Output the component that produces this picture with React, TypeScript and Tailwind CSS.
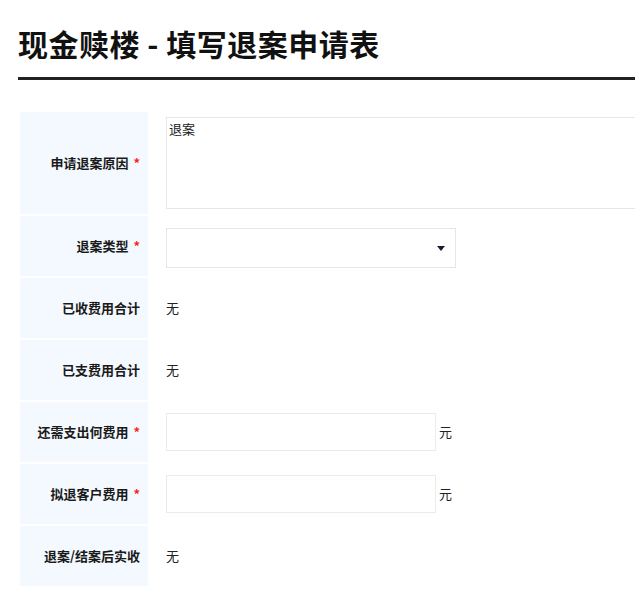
import React from 'react';

const font = { fontFamily: '"Noto Sans CJK SC", "Noto Sans", sans-serif' };

function Label({ text, required }: { text: string; required?: boolean }) {
  return (
    <div className="flex items-center justify-end bg-[#f3f9fe] pr-[8px] text-[13px] font-bold text-[#1a1a1a]">
      <span>{text}</span>
      {required && <span className="ml-[5px] text-[#ff2222]">*</span>}
    </div>
  );
}

function Value({ children }: { children: React.ReactNode }) {
  return <div className="flex items-center pl-[16px] text-[13px] text-[#222]">{children}</div>;
}

function MoneyInput() {
  return (
    <div className="flex items-center">
      <input className="h-[38px] w-[270px] border border-[#ebebeb] bg-white px-2 outline-none" />
      <span className="ml-[3px]">元</span>
    </div>
  );
}

export default function App() {
  return (
    <div className="min-h-screen overflow-hidden bg-white pl-[18px] pt-[22px]" style={font}>
      <h1 className="w-[700px] border-b-[3px] border-[#222] pb-[13px] text-[30px] font-bold leading-[42px] tracking-[0.5px] text-[#111]">
        现金赎楼 - 填写退案申请表
      </h1>

      <div className="mt-[32px] ml-[2px] grid w-[700px] grid-cols-[128px_1fr] gap-[2px]">
        <Label text="申请退案原因" required />
        <div className="flex h-[102px] items-center pl-[16px]">
          <textarea
            defaultValue="退案"
            className="h-[92px] w-[600px] resize-none border border-[#e6e6e6] px-[2px] py-[2px] text-[13px] leading-[18px] text-[#222] outline-none"
          />
        </div>

        <Label text="退案类型" required />
        <div className="flex h-[60px] items-center pl-[16px] pt-[4px]">
          <div className="flex h-[40px] w-[290px] items-center justify-end border border-[#e6e6e6] pr-[10px]">
            <svg width="8" height="5" viewBox="0 0 8 5">
              <path d="M0 0 H8 L4 5 Z" fill="#1c1a36" />
            </svg>
          </div>
        </div>

        <Label text="已收费用合计" />
        <div className="h-[60px]">
          <Value>
            <span className="leading-[60px]">无</span>
          </Value>
        </div>

        <Label text="已支费用合计" />
        <div className="h-[60px]">
          <Value>
            <span className="leading-[60px]">无</span>
          </Value>
        </div>

        <Label text="还需支出何费用" required />
        <div className="flex h-[60px] items-center">
          <Value>
            <MoneyInput />
          </Value>
        </div>

        <Label text="拟退客户费用" required />
        <div className="flex h-[60px] items-center">
          <Value>
            <MoneyInput />
          </Value>
        </div>

        <Label text="退案/结案后实收" />
        <div className="h-[60px]">
          <Value>
            <span className="leading-[60px]">无</span>
          </Value>
        </div>
      </div>
    </div>
  );
}
